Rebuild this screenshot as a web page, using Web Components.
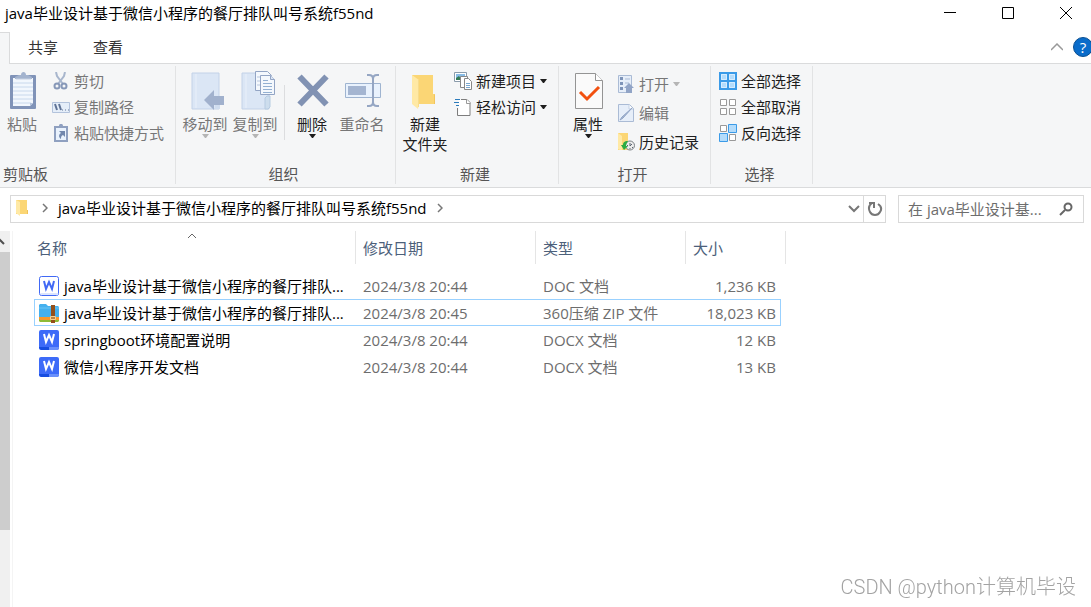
<!DOCTYPE html>
<html lang="zh-CN">
<head>
<meta charset="utf-8">
<title>文件资源管理器</title>
<style>
html, body {
    height: 100%;
    margin: 0;
}
body {
    background: #fff;
    color: #1e1e1e;
    font: 15px/20px 'Open Sans', 'Noto Sans CJK SC', sans-serif;
    overflow: hidden;
}
</style>
</head>
<body>
<x-explorer>
    <x-title-bar slot="top" name="java毕业设计基于微信小程序的餐厅排队叫号系统f55nd"></x-title-bar>
    <x-tabs slot="top"></x-tabs>
    <x-ribbon slot="top">
        <x-group name="剪贴板" class="--start">
            <x-big-button icon="paste" name="粘贴" disabled></x-big-button>
            <x-stack>
                <x-button icon="cut" name="剪切" disabled></x-button>
                <x-button icon="path" name="复制路径" disabled></x-button>
                <x-button icon="shortcut" name="粘贴快捷方式" disabled></x-button>
            </x-stack>
        </x-group>
        <x-group name="组织">
            <x-big-button icon="move" name="移动到" menu disabled></x-big-button>
            <x-big-button icon="copy" name="复制到" menu disabled></x-big-button>
            <x-divider></x-divider>
            <x-big-button icon="delete" name="删除" menu></x-big-button>
            <x-big-button icon="rename" name="重命名" disabled></x-big-button>
        </x-group>
        <x-group name="新建">
            <x-big-button icon="newfolder" name="新建 文件夹"></x-big-button>
            <x-stack>
                <x-button icon="newitem" name="新建项目" menu></x-button>
                <x-button icon="access" name="轻松访问" menu></x-button>
            </x-stack>
        </x-group>
        <x-group name="打开">
            <x-big-button icon="props" name="属性" menu></x-big-button>
            <x-stack class="--loose">
                <x-button icon="open" name="打开" menu disabled></x-button>
                <x-button icon="edit" name="编辑" disabled></x-button>
                <x-button icon="history" name="历史记录"></x-button>
            </x-stack>
        </x-group>
        <x-group name="选择">
            <x-stack>
                <x-button icon="all" name="全部选择"></x-button>
                <x-button icon="none" name="全部取消"></x-button>
                <x-button icon="invert" name="反向选择"></x-button>
            </x-stack>
        </x-group>
    </x-ribbon>
    <x-address-bar slot="top" path="java毕业设计基于微信小程序的餐厅排队叫号系统f55nd" hint="在 java毕业设计基..."></x-address-bar>
    <x-scrollbar></x-scrollbar>
    <x-file-list></x-file-list>
</x-explorer>
<x-watermark>CSDN @python计算机毕设</x-watermark>

<script>
'use strict';

// name: [width, height, markup]
const ICONS = {
    paste: [40, 40, `
        <rect x="8" y="5" width="26" height="34" rx="1" fill="#8093b8"/>
        <path d="M11 8h20v25l-3 3H11z" fill="#f2f7fd"/>
        <path d="M11 13h20M11 17h20M11 21h20M11 25h20M11 29h20M11 33h18" stroke="#c8d8ec"/>
        <path d="M31 33l-3 3v-3z" fill="#b5c4dc"/>
        <path d="M13 9V7l4-2h2c0-4 5-4 5 0h2l4 2v2z" fill="#a3b3ce"/>
        <path d="M14 9h15" stroke="#c5d0e2"/>`],
    move: [40, 40, `
        <path d="M7 3h27v36H7z" fill="#dbe6f5" stroke="#c3d2e8"/>
        <path d="M11 4v34" stroke="#e9f0fa"/>
        <path d="M30 27h5v12h-5z" fill="#d0ddef"/>
        <path d="M19 30l10-10v6h10v9H29v5z" fill="#a1b1cd"/>`],
    copy: [40, 40, `
        <path d="M7 3h27v36H7z" fill="#dbe6f5" stroke="#c3d2e8"/>
        <path d="M11 4v34" stroke="#e9f0fa"/>
        <path d="M30 39V28l2-2h3v11l-2 2z" fill="#cddded" stroke="#b6cbe1"/>
        <path d="M20.500 1.500h12l4 4v15h-16z" fill="#f4f8fd" stroke="#93a5c5"/>
        <path d="M22 7h4M22 11h4M22 15h4" stroke="#b7c6de"/>
        <path d="M25.500 5.500h10l4 4v15h-14z" fill="#f4f8fd" stroke="#93a5c5"/>
        <path d="M35.500 5.500v4h4" fill="#dbe6f5" stroke="#93a5c5"/>
        <path d="M28 10.500h5M28 13.500h9M28 16.500h9M28 19.500h9M28 22.500h9" stroke="#93b0d2"/>`],
    delete: [40, 40, `<path d="M7.500 6.500l27 28M34.500 6.500l-27 28" stroke="#8192b3" stroke-width="6"/>`],
    rename: [40, 40, `
        <path d="M3.500 13.500h35v14h-35z" fill="#e9f2fd" stroke="#9fb4d0"/>
        <path d="M6 16h18v9H6z" fill="#a4b5d1"/>
        <path d="M31 8v25M25 5h2c2 0 4 1 4 4c0-3 2-4 4-4h2M25 36h2c2 0 4-1 4-4c0 3 2 4 4 4h2" fill="none" stroke="#95a6c3" stroke-width="2"/>`],
    newfolder: [40, 40, `
        <path d="M7 5h21v19h2v10H7z" fill="#fbd675"/>
        <path d="M13 34h16v-9l1-1v10z" fill="#f2c55d"/>
        <path d="M7 5l7 5v24l-1 5l-6-5z" fill="#ffe9a5"/>
        <path d="M13.500 10v27" stroke="#f7dc8c"/>`],
    props: [40, 40, `
        <path d="M7.500 3.500h20l7 7v28h-27z" fill="#fafafa" stroke="#949494"/>
        <path d="M27.500 3.500v7h7" fill="#fff" stroke="#949494"/>
        <path d="M12 22l7 7l12-12" fill="none" stroke="#f2500f" stroke-width="3"/>`],
    cut: [18, 18, `
        <path d="M4 0l1 4l6 8M13 0l-1 4l-6 8" fill="none" stroke="#a8b6cd" stroke-width="2"/>
        <circle cx="5" cy="14" r="2.500" fill="none" stroke="#8798b8" stroke-width="2"/>
        <circle cx="12" cy="14" r="2.500" fill="none" stroke="#8798b8" stroke-width="2"/>`],
    path: [18, 18, `
        <path d="M.5 4.500h17v10H.5z" fill="#e5eef9" stroke="#b3c3dc"/>
        <path d="M3 6l2 6M7 6l2 6" stroke="#607497" stroke-width="2"/>
        <path d="M10 12h1M13 12h1M16 12h1" stroke="#607497"/>`],
    shortcut: [18, 18, `
        <path d="M3 3h12v14H3z" fill="#e9f2fd" stroke="#8fa0c0" stroke-width="2"/>
        <path d="M5 4V2h2c0-3 4-3 4 0h2v2z" fill="#8fa0c0"/>
        <path d="M7 7h6v6l-2-2c-2 1-2 2-2 4c-3-2-2-5 0-6z" fill="#7187ad"/>`],
    newitem: [18, 18, `
        <path d="M.5.5h12v9H.5z" fill="#fff" stroke="#8a9bab"/>
        <path d="M2 2h9v6H2z" fill="#88bce6"/><path d="M2 6l3-2l2 3v1H2z" fill="#347b55"/>
        <path d="M6.500 4.500h7v11h-7z" fill="#fff" stroke="#888"/>
        <path d="M10.500 6.500h4l3 3v8h-7z" fill="#fff" stroke="#888"/>
        <path d="M12 11.500h4M12 13.500h4M12 15.500h4" stroke="#79a7d0"/>`],
    access: [18, 18, `
        <path d="M4.500 1.500h8l4 4v12h-12z" fill="#fff"/>
        <path d="M7 1.500h6l3 3v13H3.500V10" fill="none" stroke="#7d7d7d"/>
        <path d="M12.500 1.500v4h4" fill="#fff" stroke="#999"/>
        <path d="M1 1.500h5M0 4.500h5M2 7.500h3" stroke="#2c7cbc"/>`],
    open: [18, 18, `
        <path d="M1.500.5h13v17h-13z" fill="#e6eef9" stroke="#aabbd5"/>
        <path d="M3 2h3v3H3zM3 7h3v3H3zM3 12h3v3H3z" fill="#7e94b8"/>
        <path d="M8 4h5M8 8h4" stroke="#aabbd5"/>
        <path d="M12 8l5 5h-2v5H9v-5H7z" fill="#91a4c6"/>`],
    edit: [18, 18, `
        <path d="M1.500.5h11l4 4v13h-15z" fill="#e6eef9" stroke="#aabbd5"/>
        <path d="M12 .5V5h4" fill="#fff" stroke="#c2d0e4"/>
        <path d="M15 4L6 14l-3 2l2-3z" fill="#a9bbd7" stroke="#91a4c5"/>`],
    history: [18, 18, `
        <path d="M1 0h10v9l1 8H1z" fill="#fbd675"/>
        <path d="M1 0l4 3v14H3l-2-1z" fill="#ffe9a5"/>
        <circle cx="13" cy="12.500" r="4.500" fill="#ececec" stroke="#7b8186"/>
        <path d="M13 10v3l2-2M10 12.500h1M15 14.500h1M13 15v1" fill="none" stroke="#5b6470"/>
        <path d="M11 8C7 8 6 10 6 12H4l3 5l4-4H9c0-2 1-3 2-5z" fill="#2cac43"/>`],
    all: [18, 18, `
        <path d="M1 1h16v16H1zM9 1v16M1 9h16" fill="#b4dcfb" stroke="#3b9be8" stroke-width="2"/>
        <path d="M2.500 2.500h5v5h-5zM10.500 2.500h5v5h-5zM2.500 10.500h5v5h-5zM10.500 10.500h5v5h-5z" fill="none" stroke="#d6edff"/>`],
    none: [18, 18, `<path d="M1.500 1.500h6v6h-6zM10.500 1.500h6v6h-6zM1.500 10.500h6v6h-6zM10.500 10.500h6v6h-6z" fill="#fff" stroke="#999"/>`],
    invert: [18, 18, `
        <path d="M1.500 1.500h6v6h-6zM10.500 10.500h6v6h-6z" fill="#fff" stroke="#999"/>
        <path d="M9.500.5h8v8h-8zM.5 9.500h8v8h-8z" fill="#b4dcfb" stroke="#3b9be8"/>`],
    folder: [14, 18, `
        <path d="M1 1h11v14H1z" fill="#fbd675"/><path d="M12 11h1v4h-1z" fill="#efc25b"/>
        <path d="M1 1l4 2v14l-4-3z" fill="#ffe9a5"/>`],
    crumb: [6, 10, `<path d="M1 1l4 4l-4 4" fill="none" stroke="#777" stroke-width="1.500"/>`],
    down: [12, 8, `<path d="M1 1l5 5l5-5" fill="none" stroke="#777" stroke-width="2"/>`],
    up: [12, 8, `<path d="M0 7l6-6l6 6" fill="none" stroke="#999" stroke-width="1.500"/>`],
    sort: [10, 6, `<path d="M1 5l4-4l4 4" fill="none" stroke="#666"/>`],
    refresh: [16, 16, `
        <path d="M11 3c3 2 4 5 2 8c-2 4-8 4-10 0C1 7 2 4 5 2" fill="none" stroke="#777" stroke-width="2"/>
        <path d="M2 2h5v5" fill="none" stroke="#777" stroke-width="2"/>`],
    search: [14, 14, `
        <circle cx="9" cy="5" r="3.500" fill="none" stroke="#666" stroke-width="2"/>
        <path d="M6 8l-5 5" stroke="#666" stroke-width="2"/>`],
    min: [12, 12, `<path d="M0 5.500h12" stroke="#000"/>`],
    max: [12, 12, `<path d="M.5.5h11v11H.5z" fill="none" stroke="#000"/>`],
    close: [12, 12, `<path d="M0 0l12 12M12 0L0 12" stroke="#000"/>`],
    menu: [7, 4, `<path d="M0 0h7L4 4H3z" fill="currentColor"/>`],
    scrollup: [10, 21, `<path d="M-2 7l6 6M-5 10l3-3" fill="none" stroke="#505050" stroke-width="2"/>`],
    doc: [20, 20, `
        <rect x=".5" y=".5" width="19" height="19" rx="2" fill="#fff" stroke="#4169f5"/>
        <path d="M1 17h9v2H2zM10 17h9v2h-9z" fill="#dce5fd"/>
        <path d="M5 5l2 8l3-7l3 7l2-8" fill="none" stroke="#4169f5" stroke-width="2"/>`],
    docx: [20, 20, `
        <rect width="20" height="20" rx="2" fill="#3d6bf8"/>
        <path d="M0 17h10v3H2l-2-2z" fill="#174de0"/><path d="M10 17h10l-1 3h-9z" fill="#6990fb"/>
        <path d="M5 4l2 8l3-7l3 7l2-8" fill="none" stroke="#fff" stroke-width="2"/>`],
    zip: [20, 20, `
        <path d="M0 12h20v6l-1 1H1l-1-1z" fill="#8dbb37"/>
        <path d="M0 11h20v6H1l-1-1z" fill="#f9982c"/>
        <path d="M0 2l1-1h6l2 2h10l1 1v10H0z" fill="#45b0ee"/>
        <path d="M0 5h20" stroke="#6bc5f6"/>
        <path d="M12 2h4v18h-4z" fill="#92501c"/>
        <path d="M11.500 13.500h5v3h-5z" fill="#ba8141" stroke="#f6d295"/>`],
};

function icon(name) {
    const [width, height, body] = ICONS[name];
    return `<svg width="${width}" height="${height}" viewBox="0 0 ${width} ${height}" aria-hidden="true">${body}</svg>`;
}

const BASE = /*css*/`
    :host {
        box-sizing: border-box;
        display: block;
    }
    * {
        box-sizing: border-box;
    }
    svg {
        display: block;
        flex: none;
    }
    button, input {
        padding: 0;
        border: 0;
        background: none;
        color: inherit;
        font: inherit;
    }
`;

class Base extends HTMLElement {
    connectedCallback() {
        if (this.shadowRoot) {
            return;
        }
        const shadow = this.attachShadow({mode: 'open'});
        shadow.innerHTML = `<style>${BASE}</style>` + this.render();
    }

    attr(name) {
        return this.getAttribute(name) || '';
    }
}

class Explorer extends Base {
    render() {
        return /*html*/`
            <style>
            :host {
                display: flex;
                flex-direction: column;
                height: 100%;
            }
            .body {
                display: flex;
                flex: 1;
                min-height: 0;
                padding-top: 8px;
            }
            </style>
            <slot name="top"></slot>
            <div class="body"><slot></slot></div>
        `;
    }
}

class TitleBar extends Base {
    render() {
        return /*html*/`
            <style>
            :host {
                display: flex;
                align-items: center;
                height: 32px;
                padding: 0 19px 6px 5px;
                color: #000;
            }
            .name {
                flex: 1;
            }
            .controls {
                display: flex;
                gap: 46px;
            }
            </style>
            <span class="name">${this.attr('name')}</span>
            <div class="controls">
                <button aria-label="最小化">${icon('min')}</button>
                <button aria-label="最大化">${icon('max')}</button>
                <button aria-label="关闭">${icon('close')}</button>
            </div>
        `;
    }
}

class Tabs extends Base {
    render() {
        return /*html*/`
            <style>
            :host {
                display: flex;
                height: 32px;
                color: #333;
            }
            .current {
                width: 10px;
                background: #f5f6f7;
                border: solid #dadbdc;
                border-width: 1px 1px 0 0;
            }
            .rest {
                display: flex;
                flex: 1;
                align-items: center;
                padding-bottom: 2px;
                border-bottom: 1px solid #dadbdc;
            }
            .tab {
                padding: 0 17px 0 18px;
            }
            .toggle {
                margin: 0 10px 0 auto;
            }
            .help {
                width: 20px;
                height: 20px;
                margin-right: -2px;
                border: 1px solid #0b4f91;
                border-radius: 50%;
                background: #0a6cca;
                color: #fff;
                line-height: 18px;
            }
            </style>
            <div class="current"></div>
            <div class="rest">
                <button class="tab">共享</button>
                <button class="tab">查看</button>
                <button class="toggle" aria-label="最小化功能区">${icon('up')}</button>
                <button class="help">?</button>
            </div>
        `;
    }
}

class Ribbon extends Base {
    render() {
        return /*html*/`
            <style>
            :host {
                display: flex;
                height: 124px;
                padding: 2px 0 3px;
                background: #f5f6f7;
                border-bottom: 1px solid #dadbdc;
            }
            </style>
            <slot></slot>
        `;
    }
}

class Group extends Base {
    render() {
        return /*html*/`
            <style>
            :host {
                display: flex;
                flex-direction: column;
                padding: 0 8px 0 4px;
                border-right: 1px solid #e2e3e4;
            }
            :host(.--start) {
                padding-left: 0;
            }
            .content {
                display: flex;
                flex: 1;
                align-items: flex-start;
            }
            :host(.--start) .content {
                gap: 4px;
            }
            .name {
                color: #555;
                text-align: center;
            }
            :host(.--start) .name {
                padding-left: 3px;
                text-align: left;
            }
            </style>
            <div class="content"><slot></slot></div>
            <div class="name">${this.attr('name')}</div>
        `;
    }
}

class Divider extends Base {
    render() {
        return /*html*/`
            <style>
            :host {
                width: 1px;
                height: 55px;
                margin: 19px 2px 0 4px;
                background: #dcdddf;
            }
            </style>
        `;
    }
}

class Stack extends Base {
    render() {
        return /*html*/`
            <style>
            :host {
                --row: 26px;
                padding: 2px 3px 0 4px;
            }
            :host(.--loose) {
                --row: 29px;
                padding-top: 3px;
            }
            </style>
            <slot></slot>
        `;
    }
}

class BigButton extends Base {
    render() {
        return /*html*/`
            <style>
            button {
                display: flex;
                flex-direction: column;
                align-items: center;
                width: 50px;
                padding: 4px 2px 0;
            }
            :host([icon="paste"]) button {
                width: 44px;
            }
            button:disabled {
                color: #777;
            }
            .name {
                margin-top: 4px;
            }
            button:disabled .menu {
                color: #b5b5b5;
            }
            </style>
            <button ${this.hasAttribute('disabled') ? 'disabled' : ''}>
                ${icon(this.attr('icon'))}
                <span class="name">${this.attr('name')}</span>
                ${this.hasAttribute('menu') ? `<span class="menu">${icon('menu')}</span>` : ''}
            </button>
        `;
    }
}

class Button extends Base {
    render() {
        return /*html*/`
            <style>
            button {
                display: flex;
                align-items: center;
                gap: 4px;
                height: var(--row);
                white-space: nowrap;
            }
            button:disabled {
                color: #777;
            }
            button:disabled .menu {
                color: #b5b5b5;
            }
            </style>
            <button ${this.hasAttribute('disabled') ? 'disabled' : ''}>
                ${icon(this.attr('icon'))}
                <span>${this.attr('name')}</span>
                ${this.hasAttribute('menu') ? `<span class="menu">${icon('menu')}</span>` : ''}
            </button>
        `;
    }
}

class AddressBar extends Base {
    render() {
        return /*html*/`
            <style>
            :host {
                display: flex;
                gap: 12px;
                padding: 7px 7px 0 10px;
            }
            .box {
                display: flex;
                align-items: center;
                height: 28px;
                border: 1px solid #d9d9d9;
            }
            .address {
                flex: 1;
                padding-left: 4px;
                color: #000;
            }
            nav {
                display: flex;
                flex: 1;
                align-items: center;
                gap: 10px;
                padding-bottom: 2px;
            }
            nav svg:first-child {
                margin-right: 3px;
            }
            a {
                color: inherit;
                text-decoration: none;
            }
            .refresh {
                display: grid;
                place-items: center;
                width: 22px;
                height: 26px;
                margin-left: 3px;
                border-left: 1px solid #d9d9d9;
            }
            .search {
                width: 17%;
                min-width: 186px;
                padding: 0 10px 0 9px;
            }
            input {
                flex: 1;
                width: 0;
                min-width: 0;
                outline: 0;
            }
            input::placeholder {
                color: #6d6d6d;
                opacity: 1;
            }
            </style>
            <div class="box address">
                <nav>
                    ${icon('folder')}
                    ${icon('crumb')}
                    <a href="#">${this.attr('path')}</a>
                    ${icon('crumb')}
                </nav>
                <button aria-label="以前的位置">${icon('down')}</button>
                <button class="refresh" aria-label="刷新">${icon('refresh')}</button>
            </div>
            <div class="box search">
                <input type="text" aria-label="搜索" placeholder="${this.attr('hint')}">
                <button aria-label="开始搜索">${icon('search')}</button>
            </div>
        `;
    }
}

class Scrollbar extends Base {
    render() {
        return /*html*/`
            <style>
            :host {
                display: flex;
                flex-direction: column;
                width: 10px;
                background: #f0f0f0;
            }
            .thumb {
                flex: 0 0 74%;
                background: #cdcdcd;
            }
            </style>
            <button aria-label="向上滚动">${icon('scrollup')}</button>
            <div class="thumb"></div>
        `;
    }
}

const PROJECT = 'java毕业设计基于微信小程序的餐厅排队...';

const FILES = [
    {icon: 'doc', name: PROJECT, date: '2024/3/8 20:44', type: 'DOC 文档', size: '1,236 KB'},
    {icon: 'zip', name: PROJECT, date: '2024/3/8 20:45', type: '360压缩 ZIP 文件', size: '18,023 KB', focused: true},
    {icon: 'docx', name: 'springboot环境配置说明', date: '2024/3/8 20:44', type: 'DOCX 文档', size: '12 KB'},
    {icon: 'docx', name: '微信小程序开发文档', date: '2024/3/8 20:44', type: 'DOCX 文档', size: '13 KB'},
];

class FileList extends Base {
    render() {
        const rows = FILES.map((file) => /*html*/`
            <tr class="${file.focused ? '--focused' : ''}">
                <td><div class="file">${icon(file.icon)}<span>${file.name}</span></div></td>
                <td>${file.date}</td>
                <td>${file.type}</td>
                <td class="size">${file.size}</td>
            </tr>
        `).join('');

        return /*html*/`
            <style>
            :host {
                flex: 1;
                margin-left: 2px;
                padding-left: 21px;
                border-left: 1px solid #f4f4f4;
            }
            table {
                width: 752px;
                border-spacing: 0;
                table-layout: fixed;
                white-space: nowrap;
            }
            th {
                position: relative;
                height: 33px;
                padding: 0 0 0 7px;
                border-right: 1px solid #e5e5e5;
                color: #4c607a;
                font-weight: 400;
                text-align: left;
            }
            th:first-child {
                padding-left: 3px;
            }
            th svg {
                position: absolute;
                top: 2px;
                left: 50%;
                margin-left: -8px;
            }
            tbody::before {
                content: '';
                display: block;
                height: 8px;
            }
            td {
                height: 27px;
                padding: 0 0 0 7px;
                border: solid transparent;
                border-width: 1px 0;
                color: #6d6d6d;
            }
            td:first-child {
                padding-left: 4px;
                border-left-width: 1px;
                color: #000;
            }
            td.size {
                padding: 0 4px 0 0;
                border-right-width: 1px;
                text-align: right;
            }
            .--focused td {
                border-color: #99d1ff;
            }
            .file {
                display: flex;
                align-items: center;
                gap: 5px;
            }
            </style>
            <table>
                <colgroup>
                    <col style="width: 322px">
                    <col style="width: 180px">
                    <col style="width: 150px">
                    <col>
                    <col style="width: 5px">
                </colgroup>
                <thead>
                    <tr>
                        <th scope="col"><button>名称</button>${icon('sort')}</th>
                        <th scope="col"><button>修改日期</button></th>
                        <th scope="col"><button>类型</button></th>
                        <th scope="col" colspan="2"><button>大小</button></th>
                    </tr>
                </thead>
                <tbody>${rows}</tbody>
            </table>
        `;
    }
}

class Watermark extends Base {
    render() {
        return /*html*/`
            <style>
            :host {
                position: fixed;
                right: 15px;
                bottom: 8px;
                color: #a3a3a3;
                font: 20px/24px Roboto, 'Noto Sans CJK SC', sans-serif;
                font-weight: 300;
            }
            </style>
            <slot></slot>
        `;
    }
}

customElements.define('x-explorer', Explorer);
customElements.define('x-title-bar', TitleBar);
customElements.define('x-tabs', Tabs);
customElements.define('x-ribbon', Ribbon);
customElements.define('x-group', Group);
customElements.define('x-divider', Divider);
customElements.define('x-stack', Stack);
customElements.define('x-big-button', BigButton);
customElements.define('x-button', Button);
customElements.define('x-address-bar', AddressBar);
customElements.define('x-scrollbar', Scrollbar);
customElements.define('x-file-list', FileList);
customElements.define('x-watermark', Watermark);
</script>
</body>
</html>
